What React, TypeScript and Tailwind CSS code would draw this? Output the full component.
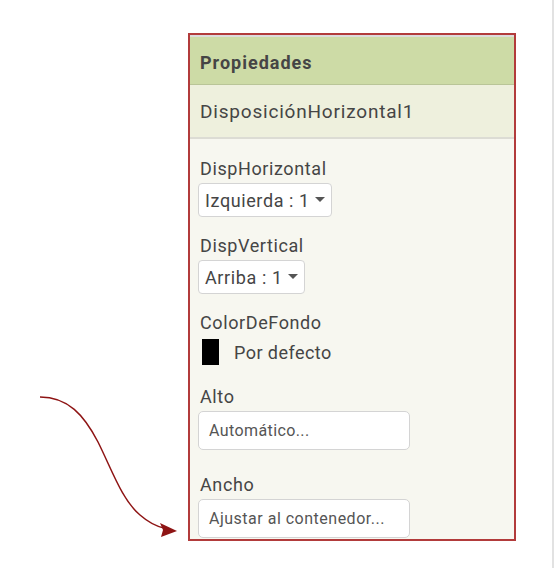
import React from "react";

function Caret() {
  return (
    <svg width="10" height="6" viewBox="0 0 10 6" className="ml-[5px]">
      <path d="M0 0 L10 0 L5 5 Z" fill="#555" />
    </svg>
  );
}

export default function App() {
  return (
    <div
      className="relative w-[554px] h-[568px] bg-white border-r-2 border-[#e2e2e2] flex overflow-hidden"
      style={{ fontFamily: "Roboto, 'Liberation Sans', sans-serif" }}
    >
      <div className="ml-[188px] mt-[33px] w-[328px] h-[508px] border-2 border-[#b23b3b] flex flex-col bg-[#f7f7f0]">
        <div className="h-[50px] border-t-2 border-[#dcdcdc] border-b border-b-[#b9c597] bg-[#cddba6] flex items-center pl-[10px] pt-[3px]">
          <span className="text-[18px] font-bold text-[#454545] tracking-[1px]">Propiedades</span>
        </div>
        <div className="h-[54px] bg-[#eef0dd] border-b-2 border-[#dcdcd4] flex items-center pl-[10px] pt-[3px]">
          <span className="text-[19px] text-[#454545] tracking-[0.8px]">DisposiciónHorizontal1</span>
        </div>
        <div className="flex flex-col items-start pl-[8px] pt-[20px] text-[#454545] tracking-[0.6px]">
          <div className="h-[19px] leading-[19px] text-[18px] pl-[2px]">DispHorizontal</div>
          <div className="mt-[5px] h-[34px] px-[6px] flex items-center bg-white border border-[#d4d4d4] rounded-[4px] text-[18px] tracking-[0.6px]">
            Izquierda : 1<Caret />
          </div>
          <div className="mt-[19px] h-[19px] leading-[19px] text-[18px] pl-[2px]">DispVertical</div>
          <div className="mt-[5px] h-[34px] px-[6px] flex items-center bg-white border border-[#d4d4d4] rounded-[4px] text-[18px] tracking-[0.6px]">
            Arriba : 1<Caret />
          </div>
          <div className="mt-[19px] h-[19px] leading-[19px] text-[18px] pl-[2px]">ColorDeFondo</div>
          <div className="mt-[7px] h-[26px] flex items-center">
            <div className="ml-[4px] w-[17px] h-[26px] bg-black" />
            <span className="ml-[15px] text-[18px] tracking-[0.45px]">Por defecto</span>
          </div>
          <div className="mt-[22px] h-[19px] leading-[19px] text-[18px] pl-[2px]">Alto</div>
          <div className="mt-[5px] w-[212px] h-[39px] pl-[10px] flex items-center bg-white border border-[#d4d4d4] rounded-[5px] text-[16px] tracking-[0.4px] text-[#555]">
            Automático...
          </div>
          <div className="mt-[25px] h-[19px] leading-[19px] text-[18px] pl-[2px]">Ancho</div>
          <div className="mt-[5px] w-[212px] h-[39px] pl-[10px] flex items-center bg-white border border-[#d4d4d4] rounded-[5px] text-[16px] tracking-[0.5px] text-[#555]">
            Ajustar al contenedor...
          </div>
        </div>
      </div>
      <svg className="absolute left-0 top-0" width="554" height="568" viewBox="0 0 554 568">
        <path
          d="M40 397 C 68 397, 84 415, 98 442 C 112 470, 122 500, 140 515 C 148 522, 155 526, 164 528"
          fill="none"
          stroke="#8e1414"
          strokeWidth="1.5"
        />
        <polygon points="177,531 160,523 163,530 161,537" fill="#8e1414" />
      </svg>
    </div>
  );
}
